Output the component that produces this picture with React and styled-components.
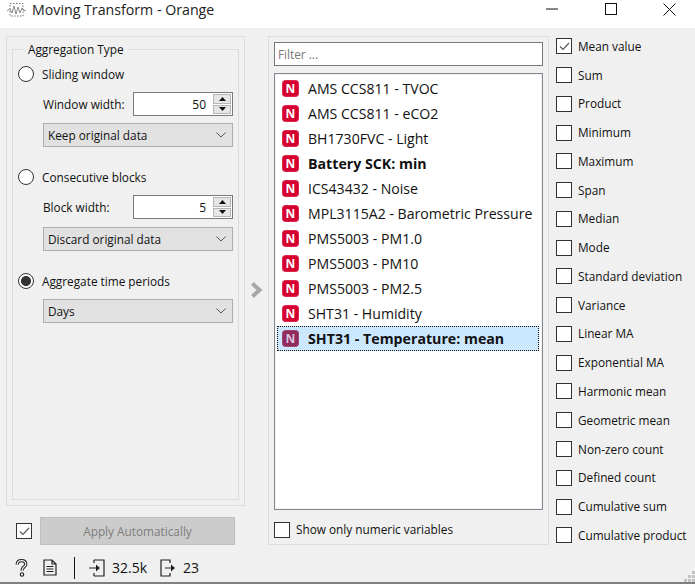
import React from 'react';
import styled, { createGlobalStyle } from 'styled-components';

const GlobalStyle = createGlobalStyle`
    html, body {
        margin: 0;
        padding: 0;
        background: #ffffff;
    }
    * {
        box-sizing: border-box;
    }
`

const variables = [
    { name: "AMS CCS811 - TVOC" },
    { name: "AMS CCS811 - eCO2" },
    { name: "BH1730FVC - Light" },
    { name: "Battery SCK: min", bold: true },
    { name: "ICS43432 - Noise" },
    { name: "MPL3115A2 - Barometric Pressure" },
    { name: "PMS5003 - PM1.0" },
    { name: "PMS5003 - PM10" },
    { name: "PMS5003 - PM2.5" },
    { name: "SHT31 - Humidity" },
    { name: "SHT31 - Temperature: mean", bold: true, selected: true }
];

const aggregations = [
    "Mean value", "Sum", "Product", "Minimum", "Maximum", "Span", "Median", "Mode",
    "Standard deviation", "Variance", "Linear MA", "Exponential MA", "Harmonic mean",
    "Geometric mean", "Non-zero count", "Defined count", "Cumulative sum", "Cumulative product"
];

const Tick = () => (
    <svg width="11" height="9" viewBox="0 0 11 9">
        <path d="M1 4.5 L4 7.5 L10 1" fill="none" stroke="#5a5a5a" strokeWidth="1.2" />
    </svg>
);

const Check = ({ checked }) => (
    <CheckBox>{checked && <Tick />}</CheckBox>
);

const Spin = ({ value }) => (
    <SpinBox>
        <SpinValue>{value}</SpinValue>
        <SpinButtons>
            <SpinButton>
                <svg width="7" height="4" viewBox="0 0 7 4"><path d="M3.5 0 L7 4 L0 4 Z" fill="#111" /></svg>
            </SpinButton>
            <SpinButton>
                <svg width="7" height="4" viewBox="0 0 7 4"><path d="M0 0 L7 0 L3.5 4 Z" fill="#111" /></svg>
            </SpinButton>
        </SpinButtons>
    </SpinBox>
);

const Combo = ({ children }) => (
    <Select>
        {children}
        <svg width="10" height="6" viewBox="0 0 10 6">
            <path d="M0.5 0.5 L5 5 L9.5 0.5" fill="none" stroke="#555" strokeWidth="1" />
        </svg>
    </Select>
);

const App = () => (
    <Window>
        <GlobalStyle />
        <TitleBar>
            <AppIcon width="19" height="16" viewBox="0 0 19 16">
                <rect x="3" y="0.5" width="13" height="12.5" fill="none" stroke="#777" strokeWidth="1" strokeDasharray="1.5 1.5" />
                <path d="M0 8 L3 6 L5 10 L7 3 L9 11 L11 4 L13 10 L15 5 L17 8 L19 7" fill="none" stroke="#8b8b8b" strokeWidth="1" />
            </AppIcon>
            <Title>Moving Transform - Orange</Title>
            <WindowButtons>
                <WindowButton>
                    <svg width="12" height="2" viewBox="0 0 12 2"><path d="M0 1 H12" stroke="#111" strokeWidth="1" /></svg>
                </WindowButton>
                <WindowButton>
                    <svg width="12" height="12" viewBox="0 0 12 12"><rect x="0.5" y="0.5" width="11" height="11" fill="none" stroke="#111" /></svg>
                </WindowButton>
                <WindowButton>
                    <svg width="13" height="13" viewBox="0 0 13 13"><path d="M0.5 0.5 L12.5 12.5 M12.5 0.5 L0.5 12.5" stroke="#111" /></svg>
                </WindowButton>
            </WindowButtons>
        </TitleBar>
        <Content>
            <Main>
                <LeftColumn>
                    <OuterBox>
                        <GroupBox>
                            <GroupTitle>Aggregation Type</GroupTitle>
                            <RadioRow>
                                <Radio />
                                <Label>Sliding window</Label>
                            </RadioRow>
                            <Options>
                                <SpinRow>
                                    <Label>Window width:</Label>
                                    <Spin value="50" />
                                </SpinRow>
                                <Combo>Keep original data</Combo>
                            </Options>
                            <RadioRow>
                                <Radio />
                                <Label>Consecutive blocks</Label>
                            </RadioRow>
                            <Options $gap={8}>
                                <SpinRow>
                                    <Label>Block width:</Label>
                                    <Spin value="5" />
                                </SpinRow>
                                <Combo>Discard original data</Combo>
                            </Options>
                            <RadioRow>
                                <Radio $on />
                                <Label>Aggregate time periods</Label>
                            </RadioRow>
                            <Options>
                                <Combo>Days</Combo>
                            </Options>
                        </GroupBox>
                    </OuterBox>
                    <ApplyRow>
                        <Check checked />
                        <ApplyButton>Apply Automatically</ApplyButton>
                    </ApplyRow>
                </LeftColumn>
                <Arrow>
                    <svg width="13" height="16" viewBox="0 0 13 16">
                        <path d="M2.5 1.5 L9.5 8 L2.5 14.5" fill="none" stroke="#a6a6a6" strokeWidth="4" />
                    </svg>
                </Arrow>
                <MiddleBox>
                    <FilterInput>Filter ...</FilterInput>
                    <VariableList>
                        {variables.map(item => (
                            <VariableRow key={item.name} $selected={item.selected}>
                                <NBadge $selected={item.selected}>N</NBadge>
                                <VariableName $bold={item.bold}>{item.name}</VariableName>
                            </VariableRow>
                        ))}
                    </VariableList>
                    <NumericRow>
                        <Check />
                        <Label>Show only numeric variables</Label>
                    </NumericRow>
                </MiddleBox>
                <RightColumn>
                    {aggregations.map((name, i) => (
                        <AggRow key={name}>
                            <Check checked={i === 0} />
                            <Label>{name}</Label>
                        </AggRow>
                    ))}
                </RightColumn>
            </Main>
            <StatusBar>
                <StatusIcon $after={15} width="13" height="18" viewBox="0 0 13 18">
                    <path d="M2.2 5.5 C2.2 2.8 4 1.6 6.5 1.6 C9 1.6 10.8 3 10.8 5.2 C10.8 7.6 7 8 7 11.5" fill="none" stroke="#222" strokeWidth="3.2" />
                    <path d="M2.2 5.5 C2.2 2.8 4 1.6 6.5 1.6 C9 1.6 10.8 3 10.8 5.2 C10.8 7.6 7 8 7 11.5" fill="none" stroke="#f0f0f0" strokeWidth="1.2" />
                    <circle cx="7" cy="15.5" r="1.7" fill="#f0f0f0" stroke="#222" strokeWidth="1.1" />
                </StatusIcon>
                <StatusIcon $after={17} width="14" height="17" viewBox="0 0 14 17">
                    <path d="M1 1 H9 L13 5 V16 H1 Z M9 1 V5 H13 M3.5 7.5 H10.5 M3.5 10 H10.5 M3.5 12.5 H10.5" fill="none" stroke="#222" strokeWidth="1.2" />
                </StatusIcon>
                <StatusDivider />
                <StatusIcon $after={7} width="16" height="18" viewBox="0 0 16 18">
                    <path d="M5 1 H15 V17 H5 M5 1 V4 M5 17 V14 M0 9 H8" fill="none" stroke="#222" strokeWidth="1.2" />
                    <path d="M7 5.5 L11 9 L7 12.5 Z" fill="#222" />
                </StatusIcon>
                <StatusText>32.5k</StatusText>
                <StatusIcon $before={13} $after={7} width="16" height="18" viewBox="0 0 16 18">
                    <path d="M10 4 V1 H1 V17 H10 V14 M5 9 H12" fill="none" stroke="#222" strokeWidth="1.2" />
                    <path d="M11 5.5 L15 9 L11 12.5 Z" fill="#222" />
                </StatusIcon>
                <StatusText>23</StatusText>
                <Grip>
                    <svg width="11" height="11" viewBox="0 0 11 11">
                        <path d="M8 0 h3 v3 h-3 Z M4 4 h3 v3 h-3 Z M8 4 h3 v3 h-3 Z M0 8 h3 v3 h-3 Z M4 8 h3 v3 h-3 Z M8 8 h3 v3 h-3 Z" fill="#c4c4c4" />
                    </svg>
                </Grip>
            </StatusBar>
        </Content>
    </Window>
);

export default App;

const Window = styled.div`
    width: 695px;
    height: 585px;
    display: flex;
    flex-direction: column;
    overflow: hidden;
    font-family: "Open Sans", "Noto Sans", sans-serif;
    font-size: 11.8px;
    color: #111;
    background: #fff;
`

const TitleBar = styled.div`
    height: 28px;
    flex: none;
    display: flex;
    align-items: center;
    padding-left: 7px;
    background: #fff;
`

const AppIcon = styled.svg`
    margin-right: 6px;
    margin-top: -7px;
`

const Title = styled.div`
    font-size: 14.2px;
    color: #222;
    margin-top: -10px;
`

const WindowButtons = styled.div`
    margin-left: auto;
    display: flex;
    gap: 6.5px;
    margin-top: -10px;
`

const WindowButton = styled.div`
    width: 52px;
    height: 18px;
    display: flex;
    align-items: center;
    justify-content: center;
`

const Content = styled.div`
    height: 556px;
    flex: none;
    display: flex;
    flex-direction: column;
    background: #f0f0f0;
    border-bottom: 2px solid #7f7f7f;
`

const Main = styled.div`
    height: 525px;
    flex: none;
    display: flex;
    padding: 8px 0 0 6px;
`

const LeftColumn = styled.div`
    width: 239px;
    flex: none;
`

const OuterBox = styled.div`
    height: 470px;
    border: 1px solid #dcdcdc;
    padding: 12px 5px 5px;
`

const GroupBox = styled.div`
    position: relative;
    height: 100%;
    border: 1px solid #dcdcdc;
    padding: 15px 5px 0 5px;
`

const GroupTitle = styled.div`
    position: absolute;
    top: -9px;
    left: 10px;
    padding: 0 5px;
    background: #f0f0f0;
    line-height: 17px;
`

const RadioRow = styled.div`
    height: 18px;
    display: flex;
    align-items: center;
    gap: 8px;
`

const Radio = styled.div`
    width: 16px;
    height: 16px;
    flex: none;
    border-radius: 50%;
    border: 1px solid #333;
    background: ${props => props.$on
        ? "radial-gradient(circle, #333 0, #333 4.6px, #fff 5.4px)"
        : "#fff"};
`

const Label = styled.span`
    white-space: nowrap;
    line-height: 17px;
`

const Options = styled.div`
    padding: 9px 0 0 25px;
    margin-bottom: 21px;
    display: flex;
    flex-direction: column;
    gap: ${props => props.$gap || 7}px;
`

const SpinRow = styled.div`
    display: flex;
    align-items: center;
    justify-content: space-between;
`

const SpinBox = styled.div`
    width: 100px;
    height: 24px;
    display: flex;
    align-items: center;
    justify-content: flex-end;
    background: #fff;
    border: 1px solid #7a7a7a;
    padding-right: 1px;
`

const SpinValue = styled.span`
    font-size: 12px;
    margin-right: 7px;
`

const SpinButtons = styled.div`
    width: 18px;
    height: 20px;
    display: flex;
    flex-direction: column;
    gap: 1px;
`

const SpinButton = styled.div`
    flex: 1;
    display: flex;
    align-items: center;
    justify-content: center;
    background: #e6e6e6;
    border: 1px solid #b5b5b5;
`

const Select = styled.div`
    height: 24px;
    display: flex;
    align-items: center;
    justify-content: space-between;
    padding: 0 6px 0 4px;
    background: #e1e1e1;
    border: 1px solid #adadad;
`

const ApplyRow = styled.div`
    display: flex;
    align-items: center;
    gap: 8px;
    margin: 11px 0 0 10px;
`

const CheckBox = styled.div`
    width: 16px;
    height: 16px;
    flex: none;
    display: flex;
    align-items: center;
    justify-content: center;
    background: #fff;
    border: 1px solid #333;
`

const ApplyButton = styled.div`
    width: 195px;
    height: 28px;
    display: flex;
    align-items: center;
    justify-content: center;
    background: #cccccc;
    border: 1px solid #bfbfbf;
    color: #7d7d7d;
`

const Arrow = styled.div`
    width: 23px;
    height: 508px;
    flex: none;
    display: flex;
    align-items: center;
    justify-content: center;
`

const MiddleBox = styled.div`
    width: 281px;
    height: 509px;
    flex: none;
    border: 1px solid #dcdcdc;
    padding: 5px;
    display: flex;
    flex-direction: column;
`

const FilterInput = styled.div`
    height: 24px;
    flex: none;
    display: flex;
    align-items: center;
    padding-left: 3px;
    background: #fff;
    border: 1px solid #7a7a7a;
    color: #777;
`

const VariableList = styled.div`
    height: 437px;
    flex: none;
    margin-top: 7px;
    padding: 2px 3px 2px 2px;
    background: #fff;
    border: 1px solid #828790;
    box-shadow: inset 0 0 0 1px #f3f3f3;
`

const VariableRow = styled.div`
    height: 25px;
    display: flex;
    align-items: center;
    padding-left: 5px;
    gap: 9px;
    background: ${props => props.$selected ? "#cce8ff" : "transparent"};
    outline: ${props => props.$selected ? "1px dotted #111" : "none"};
    outline-offset: -1px;
`

const NBadge = styled.div`
    width: 17px;
    height: 17px;
    flex: none;
    display: flex;
    align-items: center;
    justify-content: center;
    border-radius: 4px;
    font-size: 12px;
    font-weight: 700;
    color: ${props => props.$selected ? "#d9c4e0" : "#fff"};
    background: ${props => props.$selected ? "#8e2a5c" : "#d5002f"};
    box-shadow: inset 0 0 0 1px rgba(255, 255, 255, 0.15);
`

const VariableName = styled.span`
    font-size: ${props => props.$bold ? 14.2 : 14.1}px;
    white-space: nowrap;
    font-weight: ${props => props.$bold ? 700 : 400};
`

const NumericRow = styled.div`
    display: flex;
    align-items: center;
    gap: 6px;
    margin-top: 11px;
`

const RightColumn = styled.div`
    margin: -4px 0 0 7px;
    height: 517.7px;
    flex: 1;
    display: grid;
    grid-template-rows: repeat(18, 1fr);
`

const AggRow = styled.div`
    display: flex;
    align-items: center;
    gap: 6px;
`

const StatusBar = styled.div`
    flex: 1;
    display: flex;
    align-items: center;
    padding-left: 15px;
    position: relative;
    font-size: 14px;
`

const StatusIcon = styled.svg`
    flex: none;
    margin: 0 ${props => props.$after}px 0 ${props => props.$before || 0}px;
`

const StatusDivider = styled.div`
    width: 1px;
    height: 22px;
    background: #111;
    margin-right: 14px;
`

const StatusText = styled.span`
    white-space: nowrap;
`

const Grip = styled.div`
    position: absolute;
    right: 0;
    bottom: 0;
    line-height: 0;
`
